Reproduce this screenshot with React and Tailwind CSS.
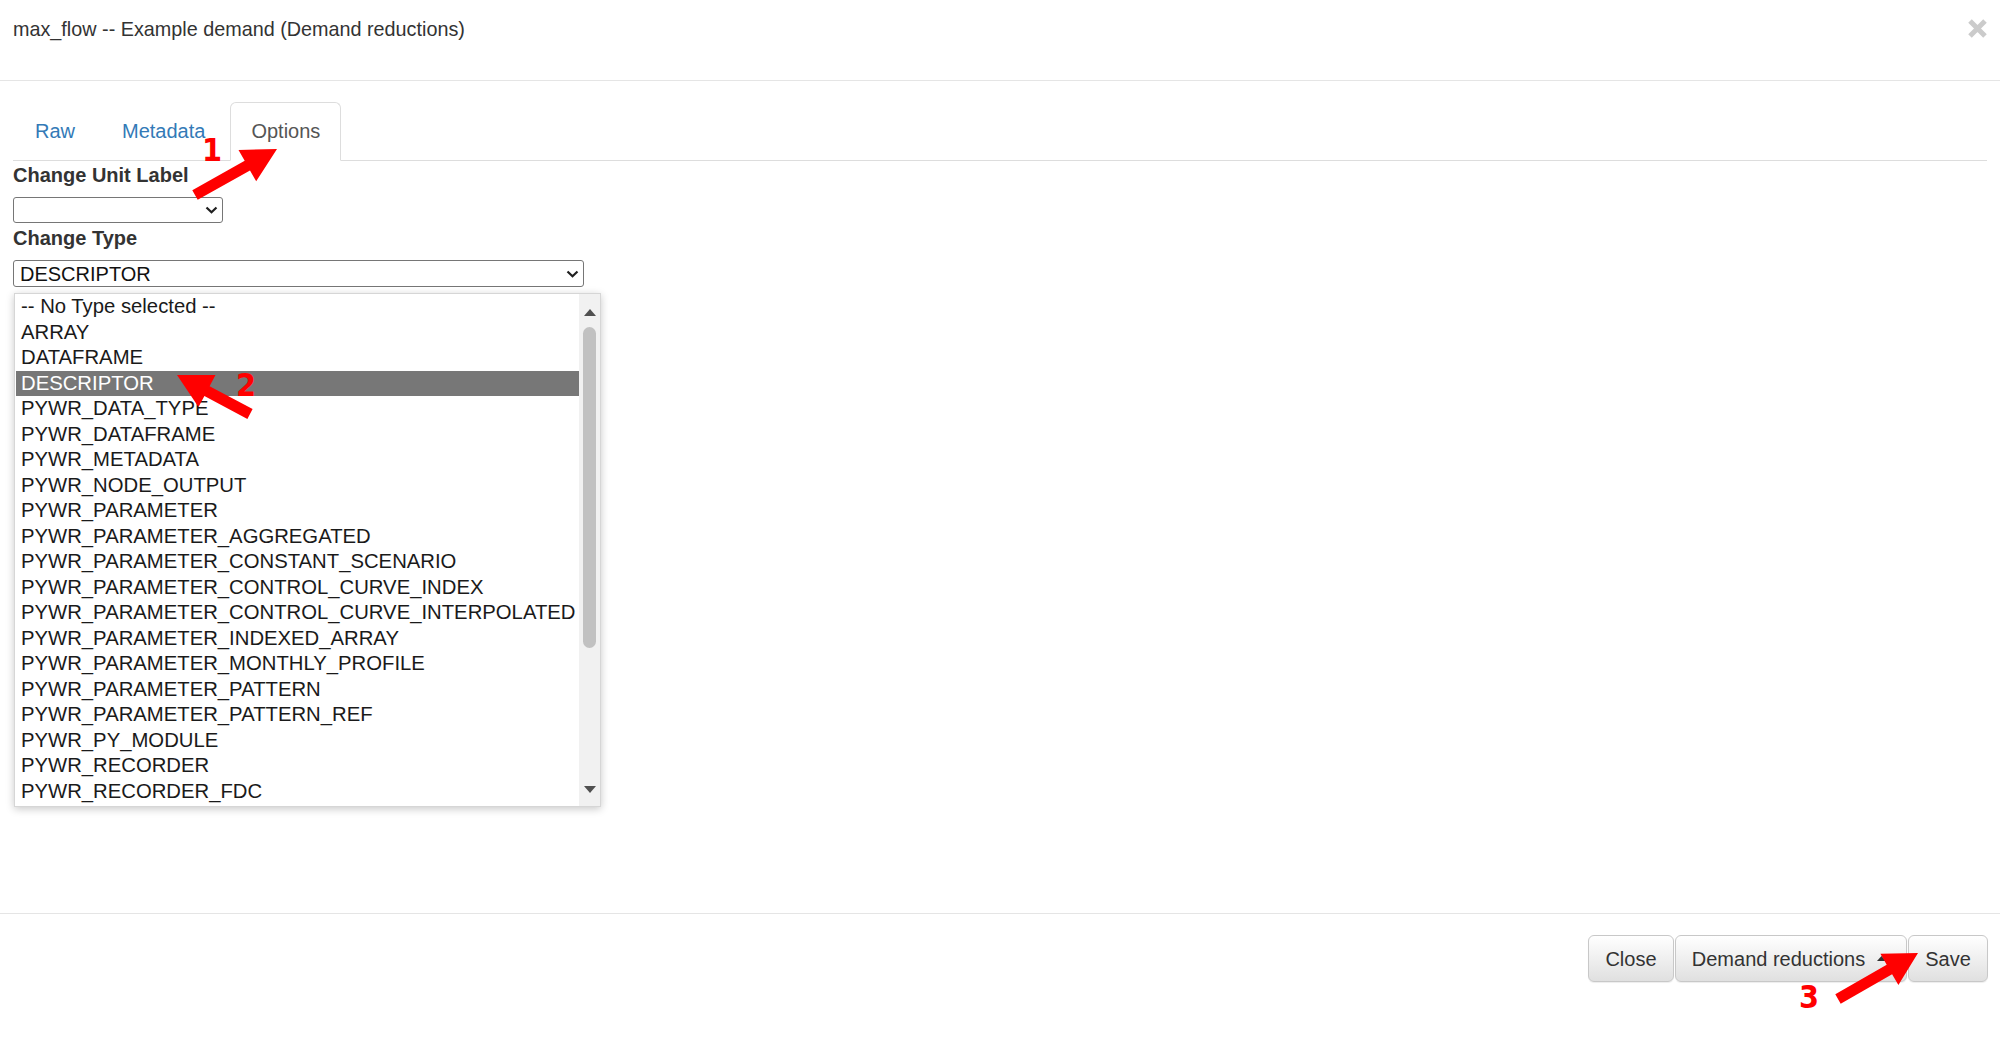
import React from 'react'

const types = [
  '-- No Type selected --',
  'ARRAY',
  'DATAFRAME',
  'DESCRIPTOR',
  'PYWR_DATA_TYPE',
  'PYWR_DATAFRAME',
  'PYWR_METADATA',
  'PYWR_NODE_OUTPUT',
  'PYWR_PARAMETER',
  'PYWR_PARAMETER_AGGREGATED',
  'PYWR_PARAMETER_CONSTANT_SCENARIO',
  'PYWR_PARAMETER_CONTROL_CURVE_INDEX',
  'PYWR_PARAMETER_CONTROL_CURVE_INTERPOLATED',
  'PYWR_PARAMETER_INDEXED_ARRAY',
  'PYWR_PARAMETER_MONTHLY_PROFILE',
  'PYWR_PARAMETER_PATTERN',
  'PYWR_PARAMETER_PATTERN_REF',
  'PYWR_PY_MODULE',
  'PYWR_RECORDER',
  'PYWR_RECORDER_FDC',
]

// polygon for a fat annotation arrow, tail -> tip
function arrowPoints(tail, tip, shaft = 11, headL = 34, headW = 36) {
  const dx = tip[0] - tail[0]
  const dy = tip[1] - tail[1]
  const len = Math.hypot(dx, dy)
  const ux = dx / len
  const uy = dy / len
  const nx = -uy
  const ny = ux
  const bx = tip[0] - ux * headL
  const by = tip[1] - uy * headL
  const p = (x, y, k) => `${(x + nx * k).toFixed(1)},${(y + ny * k).toFixed(1)}`
  return [
    p(tail[0], tail[1], shaft / 2),
    p(bx, by, shaft / 2),
    p(bx, by, headW / 2),
    `${tip[0]},${tip[1]}`,
    p(bx, by, -headW / 2),
    p(bx, by, -shaft / 2),
    p(tail[0], tail[1], -shaft / 2),
  ].join(' ')
}

function Chevron() {
  return (
    <svg width="13" height="8" viewBox="0 0 13 8" className="shrink-0">
      <path d="M1.5 1.5 L6.5 6.3 L11.5 1.5" fill="none" stroke="#1f1f1f" strokeWidth="2.2" />
    </svg>
  )
}

function Btn({ children, className = '' }) {
  return (
    <button
      className={`flex h-[47px] items-center justify-center rounded-[6px] border border-[#c8c8c8] bg-gradient-to-b from-white to-[#e0e0e0] text-[20px] text-[#333] shadow-[inset_0_1px_0_rgba(255,255,255,0.15),0_1px_1px_rgba(0,0,0,0.075)] ${className}`}
    >
      {children}
    </button>
  )
}

export default function App() {
  return (
    <div className="relative h-[1042px] w-[2000px] overflow-hidden bg-white font-['Liberation_Sans',Arial,sans-serif] text-[#333]">
      {/* header */}
      <div className="flex h-[81px] items-start justify-between border-b border-[#e5e5e5] pl-[13px] pr-[12px] pt-[15px]">
        <h4 className="text-[19.8px] leading-[28px] text-[#333]">max_flow -- Example demand (Demand reductions)</h4>
        <svg width="21" height="21" viewBox="0 0 21 21" className="mt-[3px]">
          <path d="M3 3 L18 18 M18 3 L3 18" stroke="#cbcbcb" strokeWidth="5" strokeLinecap="butt" />
        </svg>
      </div>

      {/* body */}
      <div className="h-[832px] px-[13px] pt-[21px]">
        <ul className="flex h-[59px] border-b border-[#ddd]">
          <li className="mr-[3px]">
            <a className="block rounded-t-[6px] border border-transparent px-[21px] py-[14px] text-[20px] leading-[29px] text-[#337ab7]">Raw</a>
          </li>
          <li className="mr-[3px]">
            <a className="block rounded-t-[6px] border border-transparent px-[21px] py-[14px] text-[20px] leading-[29px] text-[#337ab7]">Metadata</a>
          </li>
          <li className="mb-[-1px]">
            <a className="block rounded-t-[6px] border border-[#ddd] border-b-white bg-white px-[20px] py-[14px] text-[20px] leading-[29px] text-[#555]">Options</a>
          </li>
        </ul>

        <div className="h-[29px] text-[20px] font-bold leading-[29px] text-[#333]">Change Unit Label</div>
        <div className="mt-[7px] flex h-[26px] w-[210px] items-center justify-end rounded-[3px] border border-[#767676] bg-white pr-[4px]">
          <Chevron />
        </div>

        <div className="mt-[1px] h-[29px] text-[20px] font-bold leading-[29px] text-[#333]">Change Type</div>
        <div className="mt-[7px] flex h-[27px] w-[571px] items-center justify-between rounded-[3px] border border-[#767676] bg-white pl-[6px] pr-[4px]">
          <span className="text-[20px] leading-none text-[#111]">DESCRIPTOR</span>
          <Chevron />
        </div>

        {/* open select list */}
        <div className="ml-[1px] mt-[6px] flex h-[514px] w-[587px] border border-[#d6d6d6] bg-white shadow-[0_2px_8px_rgba(0,0,0,0.22)]">
          <div className="flex-1 pl-[1px]">
            {types.map((t) => (
              <div
                key={t}
                className={`h-[25.5px] whitespace-nowrap pl-[5px] text-[20.3px] leading-[25.5px] ${
                  t === 'DESCRIPTOR' ? 'bg-[#777] text-white' : 'text-[#1a1a1a]'
                }`}
              >
                {t}
              </div>
            ))}
          </div>
          <div className="flex w-[21px] flex-col items-center bg-[#f1f1f1] pb-[13px] pt-[15px]">
            <svg width="12" height="7" viewBox="0 0 12 7">
              <path d="M0 7 L6 0 L12 7 Z" fill="#505050" />
            </svg>
            <div className="mt-[11px] h-[321px] w-[13px] rounded-full bg-[#c1c1c1]" />
            <div className="flex-1" />
            <svg width="12" height="7" viewBox="0 0 12 7">
              <path d="M0 0 L12 0 L6 7 Z" fill="#505050" />
            </svg>
          </div>
        </div>
      </div>

      {/* footer */}
      <div className="flex justify-end gap-[1px] border-t border-[#e5e5e5] pr-[12px] pt-[21px]">
        <Btn className="w-[86px]">Close</Btn>
        <Btn className="w-[232px] pl-[4px] pr-[8px]">
          Demand reductions
          <svg width="9" height="5" viewBox="0 0 9 5" className="ml-[12px]">
            <path d="M0 5 L4.5 0 L9 5 Z" fill="#333" />
          </svg>
        </Btn>
        <Btn className="w-[80px]">Save</Btn>
      </div>

      {/* annotation overlay */}
      <svg className="pointer-events-none absolute left-0 top-0" width="2000" height="1042">
        <polygon points={arrowPoints([195, 195], [277, 149])} fill="#ff0000" />
        <polygon points={arrowPoints([250, 414], [177, 375])} fill="#ff0000" />
        <polygon points={arrowPoints([1838, 999], [1918, 953], 11, 33, 36)} fill="#ff0000" />
      </svg>
      <span className="absolute left-[202px] top-[134px] font-['DejaVu_Sans_Condensed','DejaVu_Sans',sans-serif] text-[32px] font-bold leading-none text-[#ff0000]">1</span>
      <span className="absolute left-[236px] top-[369px] font-['DejaVu_Sans_Condensed','DejaVu_Sans',sans-serif] text-[32px] font-bold leading-none text-[#ff0000]">2</span>
      <span className="absolute left-[1799px] top-[981px] font-['DejaVu_Sans_Condensed','DejaVu_Sans',sans-serif] text-[32px] font-bold leading-none text-[#ff0000]">3</span>
    </div>
  )
}
